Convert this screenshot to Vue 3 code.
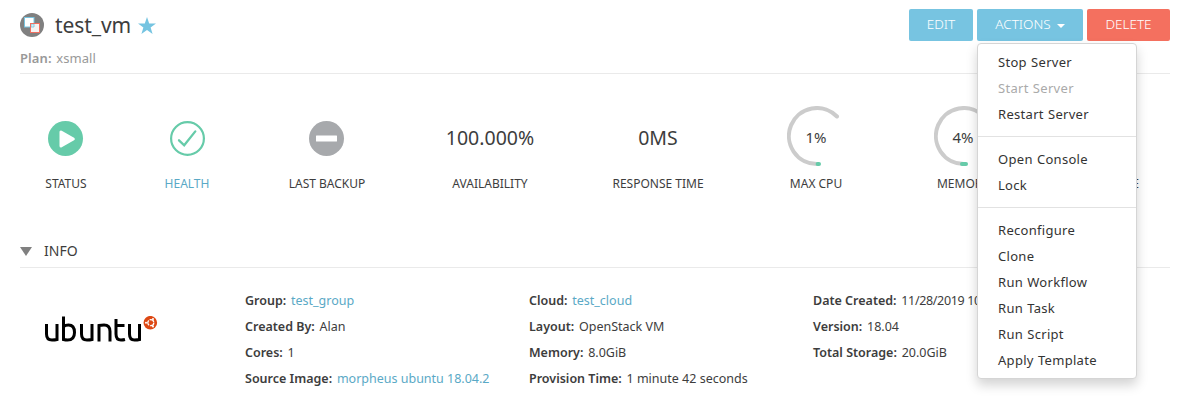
<script setup>
const stats = [
  { label: 'STATUS', kind: 'play', w: 120 },
  { label: 'HEALTH', kind: 'check', w: 122, link: true },
  { label: 'LAST BACKUP', kind: 'minus', w: 158 },
  { label: 'AVAILABILITY', value: '100.000%', w: 168 },
  { label: 'RESPONSE TIME', value: '0MS', w: 168 },
  { label: 'MAX CPU', kind: 'gauge', value: '1%', arc: 1.4, w: 148 },
  { label: 'MEMORY', kind: 'gauge', value: '4%', arc: 4, w: 146 },
  { label: 'STORAGE', kind: 'gauge', value: '9%', arc: 9, w: 153 },
]
const info = [
  [
    { k: 'Group:', v: 'test_group', link: true },
    { k: 'Created By:', v: 'Alan' },
    { k: 'Cores:', v: '1' },
    { k: 'Source Image:', v: 'morpheus ubuntu 18.04.2', link: true },
  ],
  [
    { k: 'Cloud:', v: 'test_cloud', link: true },
    { k: 'Layout:', v: 'OpenStack VM' },
    { k: 'Memory:', v: '8.0GiB' },
    { k: 'Provision Time:', v: '1 minute 42 seconds' },
  ],
  [
    { k: 'Date Created:', v: '11/28/2019 10:24', tight: true },
    { k: 'Version:', v: '18.04' },
    { k: 'Total Storage:', v: '20.0GiB' },
  ],
]
const menu = [
  ['Stop Server', 'Start Server', 'Restart Server'],
  ['Open Console', 'Lock'],
  ['Reconfigure', 'Clone', 'Run Workflow', 'Run Task', 'Run Script', 'Apply Template'],
]
</script>

<template>
  <div class="page">
    <header class="head">
      <div>
        <div class="title">
          <svg class="vm" width="24" height="24" viewBox="0 0 24 24">
            <circle cx="12" cy="12" r="12" fill="#808080" />
            <rect x="4.500" y="4.500" width="9.500" height="9.500" fill="#fff" stroke="#78c4e0" />
            <rect x="10.500" y="10.500" width="9" height="9" fill="#f5f3f3" stroke="#ef6f60" />
            <path d="M11 14v-3h3v3z" fill="#d9eef6" stroke="#78c4e0" stroke-width=".8" />
            <path d="M10.500 14v-3.500H14" fill="none" stroke="#ef6f60" />
          </svg>
          <h1>test_vm</h1>
          <svg class="star" width="18" height="18" viewBox="0 0 18 18">
            <path d="M9 0l2.200 6.400H18l-5.400 4.200L14.600 17 9 13.100 3.400 17l2-6.400L0 6.400h6.800z" fill="#75c4e1" />
          </svg>
        </div>
        <div class="plan"><b>Plan:</b> xsmall</div>
      </div>
      <div class="buttons">
        <button class="btn edit">EDIT</button>
        <div class="drop">
          <button class="btn actions">ACTIONS <i class="caret"></i></button>
          <div class="menu">
            <ul v-for="(g, i) in menu" :key="i">
              <li v-for="m in g" :key="m" :class="{ off: m === 'Start Server' }">{{ m }}</li>
            </ul>
          </div>
        </div>
        <button class="btn delete">DELETE</button>
      </div>
    </header>

    <section class="stats">
      <div v-for="s in stats" :key="s.label" class="stat" :style="{ width: s.w + 'px' }">
        <div class="visual">
          <svg v-if="s.kind === 'play'" width="36" height="36" viewBox="0 0 36 36">
            <circle cx="17.500" cy="18.500" r="17.500" fill="#66cba9" />
            <path d="M13 12v14l12.300-7z" fill="#fff" stroke="#fff" stroke-width="3" stroke-linejoin="round" />
          </svg>
          <svg v-else-if="s.kind === 'check'" width="36" height="36" viewBox="0 0 36 36">
            <circle cx="18.500" cy="18.500" r="16.400" fill="none" stroke="#66cba9" stroke-width="2.200" />
            <path d="M10 20.300l5.200 5L26.300 11.400" fill="none" stroke="#66cba9" stroke-width="2.300" stroke-linecap="round" />
          </svg>
          <svg v-else-if="s.kind === 'minus'" width="36" height="36" viewBox="0 0 36 36">
            <circle cx="17.500" cy="18.500" r="17.500" fill="#a7a9ac" />
            <rect x="7" y="15.500" width="21" height="6" rx=".5" fill="#fff" />
          </svg>
          <div v-else-if="s.kind === 'gauge'" class="gauge">
            <svg width="60" height="60" viewBox="0 0 60 60">
              <path d="M50 10.500A28 28 0 1 0 30 58" fill="none" stroke="#ccc" stroke-width="4" stroke-linecap="round" />
              <path :d="`M${32 - s.arc} 58H32`" fill="none" stroke="#66cba9" stroke-width="4" stroke-linecap="round" />
            </svg>
            <span>{{ s.value }}</span>
          </div>
          <span v-else class="big">{{ s.value }}</span>
        </div>
        <div class="label" :class="{ link: s.link }">{{ s.label }}</div>
      </div>
    </section>

    <div class="section"><i class="tri"></i>INFO</div>

    <section class="info">
      <div class="logo">
        <svg width="114" height="30" viewBox="0 0 114 30">
          <g fill="none" stroke="#000" stroke-width="3">
            <path d="M2.500 8v10q0 6 5.500 6 3 0 5-.5V8" />
            <path d="M19.500 .5V23.500q2 .500 4 .500 7 0 7-7.500t-6-7.500q-3 0-5 1.500" />
            <path d="M37.500 8v10q0 6 5.500 6 3 0 5-.5V8" />
            <path d="M55 25.500V9.500q2.500-.500 5-.500 6 0 6 6.500v10" />
            <path d="M72 3v15q0 6 5 6 2 0 4-.5M72 9.500H80.500" />
            <path d="M85.500 8v10q0 6 5 6 3 0 5-.5V8" />
          </g>
          <circle cx="106.300" cy="6.700" r="6.800" fill="#dd4814" />
          <circle cx="106.800" cy="6.700" r="3" fill="none" stroke="#fff" stroke-width="1.300" stroke-dasharray="5.300 1" />
          <g fill="#fff"><circle cx="102" cy="6.700" r="1" /><circle cx="109" cy="2.900" r="1" /><circle cx="109" cy="10.500" r="1" /></g>
        </svg>
      </div>
      <div v-for="(col, i) in info" :key="i" class="col">
        <div v-for="r in col" :key="r.k" class="row"><b>{{ r.k }}</b> <span :class="{ link: r.link, tight: r.tight }">{{ r.v }}</span></div>
      </div>
    </section>
  </div>
</template>

<style>
body { background: #fff; overflow: hidden; }
</style>
<style scoped>
.page { width: 1150px; height: 402px; margin-left: 20px; font-family: "Noto Sans", "Open Sans", sans-serif; font-size: 13px; color: #3d3d3d; box-sizing: border-box; }
.head { display: flex; justify-content: space-between; height: 73px; border-bottom: 1px solid #eaeaea; }
.title { display: flex; height: 48px; padding-top: 1px; align-items: center; }
h1 { margin: 0 6px 0 11px; font-size: 21px; font-weight: 400; line-height: 28px; letter-spacing: -.1px; width: 77px; white-space: nowrap; }
.star { margin-top: 2px; }
.plan { color: #999; line-height: 18px; letter-spacing: .1px; word-spacing: 1px; }
b { font-weight: 600; }
.buttons { display: flex; gap: 4px; padding-top: 9px; }
.btn { display: flex; justify-content: center; align-items: center; width: 64px; height: 32px; padding: 0 0 2px; border: 0; border-radius: 2px; background: #77c4e1; color: #fff; font: 300 13.500px "Noto Sans", sans-serif; }
.actions { width: 106px; }
.delete { width: 83px; background: #f4705f; }
.caret { margin: 4px 0 0 6px; border: 4px solid transparent; border-top-color: #fff; border-bottom: 0; }
.drop { position: relative; }
.menu { position: absolute; z-index: 2; left: 0; top: 34px; width: 160px; box-sizing: border-box; padding: 5px 0; background: #fff; border: 1px solid #d5d5d5; border-radius: 4px; box-shadow: 0 6px 12px rgba(0, 0, 0, .175); }
ul { margin: 0; padding: 0; list-style: none; }
ul + ul { margin-top: 9px; padding-top: 9px; border-top: 1px solid #e2e2e2; }
li { padding-left: 20px; line-height: 26px; letter-spacing: .3px; word-spacing: .5px; color: #333; }
li.off { color: #aaa; }
.stats { display: flex; margin-left: -14px; width: 1183px; height: 164px; padding-top: 32px; box-sizing: border-box; }
.stat { flex: none; text-align: center; }
.visual { display: flex; height: 64px; align-items: center; justify-content: center; }
.gauge { position: relative; height: 60px; margin: 0 0 4px 2px; }
.gauge span { position: absolute; left: 0; right: 2px; top: 19px; line-height: 24px; font-size: 15px; }
.big { font-size: 19.500px; line-height: 28px; }
.label { font-size: 12px; line-height: 16px; margin-top: 6px; white-space: nowrap; }
.link { color: #5aa9c6; }
.section { display: flex; align-items: center; height: 30px; padding-bottom: 5px; border-bottom: 1px solid #eaeaea; font-size: 14px; box-sizing: border-box; }
.tri { margin: 3px 12px 0 0; border: 6px solid transparent; border-top: 9px solid #808080; border-bottom: 0; }
.info { display: flex; padding-top: 20px; }
.logo { width: 201px; padding: 28px 0 0 24px; box-sizing: border-box; }
.logo { width: 225px; }
.col { width: 284px; flex: none; white-space: nowrap; }
.row { line-height: 26px; font-size: 12.500px; }
.row b { margin-right: 1.500px; }
.tight { letter-spacing: -.35px; }
</style>
